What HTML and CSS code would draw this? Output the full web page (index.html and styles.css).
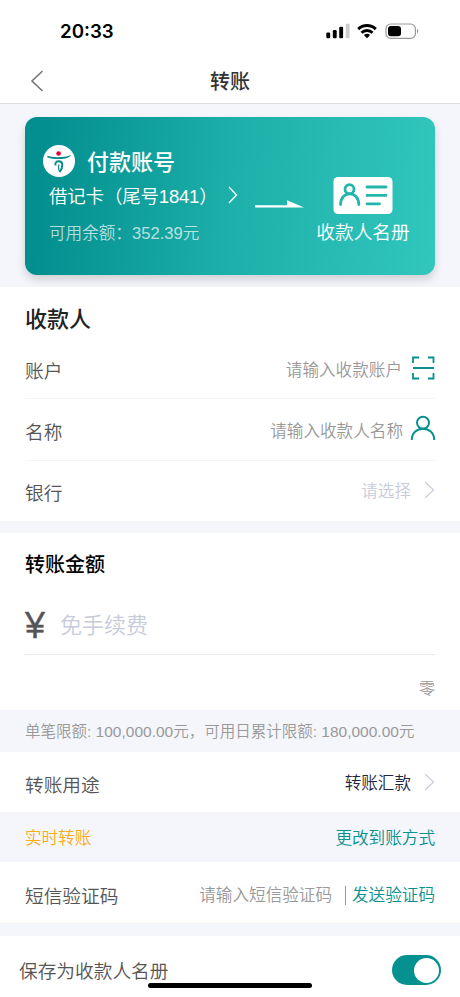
FILE: index.html
```html
<!DOCTYPE html>
<html lang="zh-CN">

<head>
  <meta charset="UTF-8">
  <meta name="viewport" content="width=device-width, initial-scale=1.0">
  <title>转账</title>
  <link rel="stylesheet" href="styles.css">
</head>

<body>
  <div class="status-bar">
    <span class="clock">20:33</span>
    <svg class="status-icons" width="96" height="18" viewBox="0 0 96 18">
      <rect x="1.3" y="10.5" width="3.9" height="5.8" rx="1.2" />
      <rect x="7.8" y="8" width="3.9" height="8.3" rx="1.2" />
      <rect x="14.2" y="4.8" width="3.9" height="11.5" rx="1.2" />
      <rect x="20.7" y="1.8" width="3.9" height="14.5" rx="1.2" fill="#ccc" />
      <g fill="none" stroke="#000" stroke-width="2.9">
        <path d="M33.2 7.1a12.6 12.6 0 0 1 17.6 0" />
        <path d="M36.5 10.8a7.8 7.8 0 0 1 11 0" />
      </g>
      <path d="M42 16.2l-3.1-3.1a4.5 4.5 0 0 1 6.2 0z" />
      <rect x="61" y="2" width="29.4" height="14.3" rx="4.8" fill="none" stroke="#999" stroke-width="1.2" />
      <rect x="63" y="4" width="13" height="10.3" rx="3" />
      <path d="M92 6.8a2.6 2.6 0 0 1 0 4.6z" fill="#999" />
    </svg>
  </div>

  <div class="nav-bar">
    <svg class="back" width="14" height="22" viewBox="0 0 14 22">
      <path d="M12.5 1L2 11l10.5 10" fill="none" stroke="#777" stroke-width="1.6" />
    </svg>
    <h1>转账</h1>
  </div>

  <!-- 付款卡片 -->
  <div class="card-area">
    <div class="card">
      <div class="payer">
        <div class="payer-title">
          <svg width="32" height="32" viewBox="0 0 32 32">
            <circle cx="16" cy="16" r="16" fill="#fff" />
            <circle cx="15.6" cy="8.5" r="2.3" fill="#e60039" />
            <path d="M4 10.8c6 1.9 17 1.9 24.6-.9-3.5 3.5-8 4.2-13 4.2-4 0-8-.2-11-1.5z" fill="#078a8c" />
            <path d="M12.600 20.500c-1-3 .8-4.200 3.200-4.200 4.400 0 4.800 5.600.700 10.800" fill="none" stroke="#078a8c" stroke-width="1.9" />
            <path d="M15.900 19.400c-.5 1.800-.5 4.200.2 6.400" fill="none" stroke="#078a8c" stroke-width="1.100" />
          </svg>
          <span>付款账号</span>
        </div>
        <div class="payer-card">
          <span>借记卡（尾号1841）</span>
          <svg width="10" height="18" viewBox="0 0 10 18">
            <path d="M1 1l7.5 8L1 17" fill="none" stroke="#fff" stroke-width="1.3" />
          </svg>
        </div>
        <div class="balance">可用余额：352.39元</div>
      </div>
      <svg class="arrow" width="50" height="8" viewBox="0 0 50 8">
        <path d="M0 5.3h32V.2L49 7.4H0z" fill="#fff" />
      </svg>
      <div class="payee-book">
        <svg width="60" height="37" viewBox="0 0 60 37">
          <rect x=".5" width="59" height="37" rx="4.5" fill="#fff" />
          <g fill="none" stroke="#22b5ac" stroke-width="2.8" stroke-linecap="round">
            <circle cx="16.5" cy="12.2" r="4.5" />
            <path d="M7.6 27.5c0-14.2 18.2-14.2 18.2 0" />
            <path d="M34 10h19M34 18.4h19M34 26.8h12.5" />
          </g>
        </svg>
        <span>收款人名册</span>
      </div>
    </div>
  </div>

  <!-- 收款人 -->
  <div class="section payee">
    <h2>收款人</h2>
    <div class="row row-first">
      <span class="label">账户</span>
      <span class="placeholder">请输入收款账户</span>
      <svg class="scan" width="24" height="24" viewBox="0 0 24 24">
        <path d="M2 7V1.5h6M17 1.5h5.5V7M2 17v5.5h6M17 22.5h5.5V17M2 12h21" fill="none" stroke="#059190" stroke-width="1.8" />
      </svg>
    </div>
    <div class="row">
      <span class="label">名称</span>
      <span class="placeholder">请输入收款人名称</span>
      <svg class="person" width="26" height="26" viewBox="0 0 26 26">
        <g fill="none" stroke="#059190" stroke-width="2">
          <circle cx="13" cy="7.8" r="6" />
          <path d="M1.8 25c0-15 22.4-15 22.4 0" />
        </g>
      </svg>
    </div>
    <div class="row row-last">
      <span class="label">银行</span>
      <span class="placeholder pale">请选择</span>
      <svg class="chevron" width="11" height="18" viewBox="0 0 11 18">
        <path d="M1 1l8.5 8L1 17" fill="none" stroke="#c8ccda" stroke-width="1.2" />
      </svg>
    </div>
  </div>

  <!-- 转账金额 -->
  <div class="section amount">
    <h3>转账金额</h3>
    <div class="amount-input">
      <span class="yen">¥</span>
      <span class="fee">免手续费</span>
    </div>
    <div class="amount-words">零</div>
  </div>

  <div class="limit">单笔限额: 100,000.00元，可用日累计限额: 180,000.00元</div>

  <div class="row purpose">
    <span class="label">转账用途</span>
    <span class="value">转账汇款</span>
    <svg class="chevron" width="11" height="18" viewBox="0 0 11 18">
      <path d="M1 1l8.5 8L1 17" fill="none" stroke="#c8ccda" stroke-width="1.2" />
    </svg>
  </div>

  <div class="arrival">
    <span class="realtime">实时转账</span>
    <span class="change">更改到账方式</span>
  </div>

  <div class="row sms">
    <span class="label">短信验证码</span>
    <span class="placeholder">请输入短信验证码</span>
    <span class="send-code">发送验证码</span>
  </div>

  <div class="save">
    <span class="label">保存为收款人名册</span>
    <div class="switch"></div>
  </div>

  <div class="home-indicator"></div>
</body>

</html>
```
FILE: styles.css
```css
* {
  box-sizing: border-box;
}

body {
  margin: 0;
  height: 997px;
  overflow: hidden;
  position: relative;
  background: #f5f6fb;
  font-family: "Liberation Sans", "Noto Sans CJK SC", sans-serif;
  font-size: 16.6px;
  font-weight: 350;
  line-height: 1.2;
  white-space: nowrap;
}

h1,
h2,
h3 {
  margin: 0;
  font-family: "Noto Sans CJK SC", sans-serif;
  font-weight: 500;
}

svg {
  display: block;
  flex: none;
}

.status-bar {
  display: flex;
  justify-content: space-between;
  align-items: center;
  height: 58px;
  padding: 4px 39px 0 60px;
  background: #fff;
}

.clock {
  padding-top: 2px;
  font-family: Inter, sans-serif;
  font-weight: 600;
  font-size: 18.7px;
}

.nav-bar {
  display: flex;
  align-items: center;
  height: 46px;
  padding: 0 30px;
  background: #fff;
  border-bottom: 1px solid #dcdde0;
}

.nav-bar h1 {
  flex: 1;
  padding-right: 14px;
  font-size: 20px;
  text-align: center;
  color: #333;
}

.card-area {
  height: 183px;
  padding: 12.5px 25px 0;
  overflow: hidden;
}

.card {
  display: flex;
  height: 158px;
  border-radius: 12px;
  color: #fff;
  background: linear-gradient(94deg, #038f8f 5%, #1dafa9 50%, #31c7bd);
  box-shadow: 0 5px 8px rgba(0, 0, 0, 0.15);
}

.payer {
  width: 230px;
  padding: 27px 0 0 18px;
}

.payer-title {
  display: flex;
  align-items: center;
  gap: 12px;
  height: 34px;
  font-family: "Noto Sans CJK SC", sans-serif;
  font-weight: 500;
  font-size: 22px;
}

.payer-card {
  display: flex;
  align-items: center;
  height: 36px;
  padding-left: 6px;
  font-size: 18.5px;
  letter-spacing: -0.2px;
}

.payer-card span {
  width: 171px;
  padding-top: 4px;
}

.payer-card svg {
  margin: 0 0 2px 8px;
}

.balance {
  padding: 10px 0 0 6px;
  color: rgba(255, 255, 255, 0.7);
}

.arrow {
  margin-top: 83px;
}

.payee-book {
  display: flex;
  flex-direction: column;
  align-items: center;
  gap: 8px;
  width: 94px;
  margin-left: 11px;
  padding-top: 60px;
  font-size: 18.7px;
}

.section {
  background: #fff;
}

.payee {
  height: 234px;
  margin-bottom: 12px;
}

.payee h2 {
  height: 53px;
  padding: 17px 25px 0;
  font-size: 22px;
  color: #222;
}

.row {
  display: flex;
  align-items: center;
  height: 61.5px;
  margin: 0 25px;
  border-bottom: 1px solid #f4f4f5;
}

.row-first {
  height: 59px;
}

.row-last {
  height: 60.5px;
  border-bottom: none;
}

.label {
  flex: 1;
  padding-top: 7px;
  font-size: 18.7px;
  color: #555;
}

.row-first .label {
  padding-top: 6px;
}

.placeholder {
  padding-top: 5px;
  color: #999;
}

.row-first .placeholder {
  padding-top: 3px;
}

.placeholder.pale {
  padding-top: 2px;
  color: #c8ccda;
}

.scan {
  margin: 0 0 2px 9px;
}

.person {
  margin: 0 -1px 2px 7px;
}

.chevron {
  margin: 0 0 2px 13px;
}

.amount {
  height: 177px;
  padding: 19px 25px 0;
}

.amount h3 {
  font-size: 20px;
  color: #000;
}

.amount-input {
  display: flex;
  align-items: center;
  height: 79px;
  padding-top: 22px;
  border-bottom: 1px solid #e9e9eb;
}

.yen {
  width: 35px;
  font-size: 36px;
  color: #555;
  -webkit-text-stroke: 0.4px #555;
}

.fee {
  font-size: 22px;
  color: #c8ccda;
}

.amount-words {
  padding-top: 24px;
  font-size: 16px;
  text-align: right;
  color: #999;
}

.limit {
  height: 42px;
  padding-left: 25px;
  font-size: 15.5px;
  line-height: 43px;
  color: #999;
}

.purpose,
.sms {
  margin: 0;
  padding: 0 25px;
  background: #fff;
}

.purpose {
  height: 61px;
}

.purpose .label,
.sms .label {
  padding-top: 9px;
}

.purpose .chevron {
  margin-bottom: 0;
}

.value {
  padding-top: 4px;
  color: #1f2440;
}

.arrival {
  display: flex;
  justify-content: space-between;
  align-items: center;
  height: 49px;
  padding: 2px 25px 0;
}

.realtime {
  color: #f8ad16;
}

.change,
.send-code {
  color: #059190;
}

.sms {
  height: 62px;
}

.sms .placeholder {
  padding-top: 6px;
}

.send-code {
  margin: 6px 0 0 13px;
  padding-left: 6px;
  border-left: 1px solid #999;
}

.save {
  display: flex;
  align-items: center;
  height: 61px;
  margin-top: 12px;
  padding: 7px 19px 0;
  background: #fff;
}

.save .label {
  padding-top: 4px;
}

.switch {
  display: flex;
  justify-content: flex-end;
  width: 49px;
  height: 30px;
  padding: 2.5px;
  border-radius: 15px;
  background: #059190;
}

.switch::after {
  content: "";
  width: 25px;
  height: 25px;
  border-radius: 50%;
  background: #fff;
}

/* 底部横条浮在页面内容之上 */
.home-indicator {
  position: absolute;
  left: 148px;
  bottom: 9px;
  width: 164px;
  height: 5px;
  border-radius: 3px;
  background: #000;
}
```
